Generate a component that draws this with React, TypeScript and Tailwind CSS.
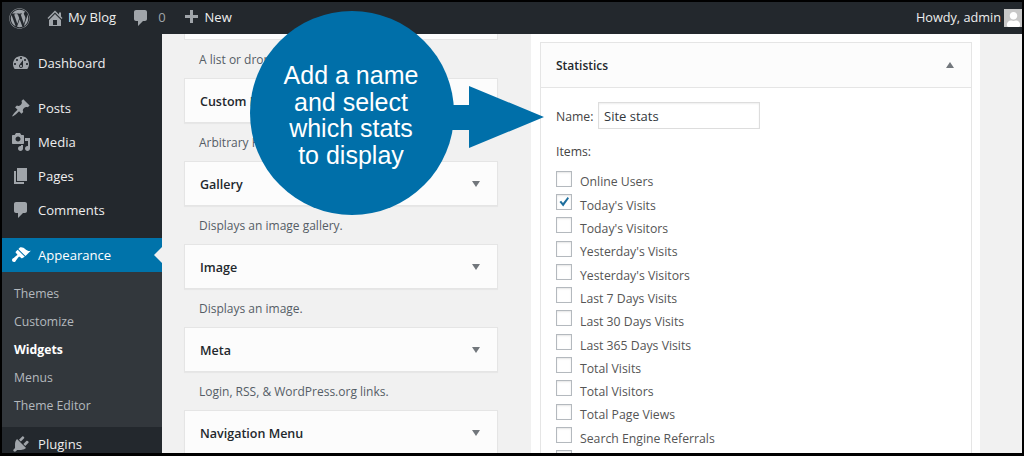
import React from "react";
import { FaWordpress, FaUser } from "react-icons/fa";

function Dash({ d, size = 20, className = "" }: { d: string; size?: number; className?: string }) {
  return (
    <svg width={size} height={size} viewBox="0 0 20 20" fill="currentColor" className={className}>
      <path d={d} />
    </svg>
  );
}

const P = {
  home: "M16 8.5l1.53 1.53-1.06 1.06L10 4.62l-6.47 6.47-1.06-1.06L10 2.5l4 4v-2h2v4zm-6-2.46l6 5.99V18H4v-5.97zM12 17v-5H8v5h4z",
  comment: "M5 2h9c1.1 0 2 .9 2 2v7c0 1.1-.9 2-2 2h-2l-5 5v-5H5c-1.1 0-2-.9-2-2V4c0-1.1.9-2 2-2z",
  plus: "M17 7v3h-5v5H9v-5H4V7h5V2h3v5h5z",
  dash: "M3.76 16h12.48c1.1-1.37 1.76-3.11 1.76-5 0-4.42-3.58-8-8-8s-8 3.58-8 8c0 1.89.66 3.63 1.76 5zM10 4c.55 0 1 .45 1 1s-.45 1-1 1-1-.45-1-1 .45-1 1-1zM6 6c.55 0 1 .45 1 1s-.45 1-1 1-1-.45-1-1 .45-1 1-1zm8 0c.55 0 1 .45 1 1s-.45 1-1 1-1-.45-1-1 .45-1 1-1zm-5.37 5.55L12 7v6c0 1.1-.9 2-2 2s-2-.9-2-2c0-.57.24-1.08.63-1.45zM4 10c.55 0 1 .45 1 1s-.45 1-1 1-1-.45-1-1 .45-1 1-1zm12 0c.55 0 1 .45 1 1s-.45 1-1 1-1-.45-1-1 .45-1 1-1zm-5 3c0-.55-.45-1-1-1s-1 .45-1 1 .45 1 1 1 1-.45 1-1z",
  pin: "M10.44 3.02l1.82-1.82 6.36 6.35-1.83 1.82c-1.05-.68-2.48-.57-3.41.36l-.75.75c-.92.93-1.04 2.35-.35 3.41l-1.83 1.82-2.41-2.41-2.8 2.79c-.42.42-3.38 2.71-3.8 2.29s1.86-3.39 2.28-3.81l2.79-2.79L4.1 9.36l1.83-1.82c1.05.69 2.48.57 3.4-.36l.75-.75c.93-.92 1.05-2.35.36-3.41z",
  media: "M13 11V4c0-.55-.45-1-1-1h-1.67L9 1H5L3.67 3H2c-.55 0-1 .45-1 1v7c0 .55.45 1 1 1h10c.55 0 1-.45 1-1zM7 4.5c1.38 0 2.5 1.12 2.5 2.5S8.38 9.5 7 9.5 4.5 8.38 4.5 7 5.62 4.5 7 4.5zM14 6h5v10.5c0 1.38-1.12 2.5-2.5 2.5S14 17.88 14 16.5s1.12-2.5 2.5-2.5c.17 0 .34.02.5.05V9h-3V6zm-4 8.05V13h2v3.5c0 1.38-1.12 2.5-2.5 2.5S7 17.88 7 16.5 8.12 14 9.5 14c.17 0 .34.02.5.05z",
  pages: "M6 15V2h10v13H6zm-1 1h8v2H3V5h2v11z",
  brush: "M14.48 11.06L7.41 3.99l1.5-1.5c.5-.56 2.3-.47 3.51.32 1.21.8 1.43 1.28 2.91 2.1 1.18.64 2.45 1.26 4.45.85zm-.71.71L6.7 4.7 4.93 6.47c-.39.39-.39 1.02 0 1.41l1.06 1.06c.39.39.39 1.03 0 1.42-.6.6-1.43 1.11-2.21 1.69-.35.26-.7.53-1.01.84C1.43 13.23 1 14.25 1 15c0 1.1.9 2 2 2 .75 0 1.77-.43 2.11-1.77.31-.31.58-.66.84-1.01.58-.78 1.09-1.61 1.69-2.21.39-.39 1.03-.39 1.42 0l1.06 1.06c.39.39 1.02.39 1.41 0z",
  plug: "M13.11 4.36L9.87 7.6 8 5.73l3.24-3.24c.35-.34 1.05-.2 1.56.32.52.51.66 1.21.31 1.55zm-8 1.77l.91-1.12 9.01 9.01-1.19.84c-.71.71-2.63 1.16-3.82 1.16H6.14L4.9 17.26c-.59.59-1.54.59-2.12 0-.59-.58-.59-1.53 0-2.12l1.24-1.24v-3.88c0-1.13.4-3.19 1.09-3.89zm7.26 3.97l3.24-3.24c.34-.35 1.04-.21 1.55.31.52.51.66 1.21.31 1.55l-3.24 3.25z",
};

function Side({ icon, label, active }: { icon: string; label: string; active?: boolean }) {
  return (
    <div className={`h-[34px] flex items-center pl-[9px] text-[13.1px] relative ${active ? "bg-[#0073aa] text-white" : "text-[#eeeeee]"}`}>
      <span className={`w-[20px] h-[20px] flex items-center justify-center mr-[7px] ${active ? "text-white" : "text-[#a0a5aa]"}`}><Dash d={icon} /></span>
      <span className="pt-[2px]">{label}</span>
      {active && <span className="absolute right-0 top-[9px] border-y-[8px] border-y-transparent border-r-[8px] border-r-[#f1f1f1]" />}
    </div>
  );
}

function Sub({ label, current }: { label: string; current?: boolean }) {
  return <div className={`h-[28px] flex items-center pl-[12px] pt-[2px] text-[12.25px] ${current ? "font-bold text-white" : "text-[#b4b9be]"}`}>{label}</div>;
}

function Widget({ title, desc }: { title: string; desc: string }) {
  return (
    <>
      <div className="h-[45px] w-[314px] shrink-0 bg-[#fcfcfc] border border-[#e5e5e5] shadow-[0_1px_1px_rgba(0,0,0,0.04)] flex items-center justify-between pl-[15px] pr-[17px]">
        <span className="text-[12.5px] font-semibold text-[#23282d] pt-[4px]">{title}</span>
        <span className="border-x-[4px] border-x-transparent border-t-[6px] border-t-[#72777c]" />
      </div>
      <div className="h-[38px] shrink-0 flex items-center pl-[15px] pt-[2px] text-[12px] text-[#555d66]">{desc}</div>
    </>
  );
}

function Check({ label, checked }: { label: string; checked?: boolean }) {
  return (
    <div className="h-[23.3px] shrink-0 flex items-center text-[12.25px] text-[#555555]">
      <span className="w-[16px] h-[16px] mr-[8px] -translate-y-[4px] border border-[#b4b9be] bg-white shadow-[inset_0_1px_2px_rgba(0,0,0,0.1)] flex items-center justify-center text-[#1e6f9e]">
        {checked && (
          <svg width="14" height="14" viewBox="0 0 14 14" fill="currentColor"><path d="M2.5 7l1.6-1.3 1.9 2.2L10.6 2 12 3.2 6.2 11.5z" /></svg>
        )}
      </span>
      {label}
    </div>
  );
}

const items = ["Online Users", "Today's Visits", "Today's Visitors", "Yesterday's Visits", "Yesterday's Visitors", "Last 7 Days Visits", "Last 30 Days Visits", "Last 365 Days Visits", "Total Visits", "Total Visitors", "Total Page Views", "Search Engine Referrals", ""];

export default function App() {
  return (
    <div className="w-[1024px] h-[456px] box-border border-2 border-b-[3px] border-black overflow-hidden relative flex flex-col bg-[#f1f1f1]" style={{ fontFamily: '"Open Sans", sans-serif' }}>
      <div className="h-[32px] shrink-0 bg-[#23282d] flex items-center text-[13px] text-[#eeeeee]">
        <span className="ml-[7px] text-[#a0a5aa] text-[21px] flex"><FaWordpress /></span>
        <span className="ml-[15px] text-[#a0a5aa] flex"><Dash d={P.home} /></span>
        <span className="ml-[3px]">My Blog</span>
        <span className="ml-[15px] text-[#a0a5aa] flex"><Dash d={P.comment} /></span>
        <span className="ml-[7px] text-[#a0a5aa]">0</span>
        <span className="ml-[15px] text-[#a0a5aa] flex"><Dash d={P.plus} /></span>
        <span className="ml-[4px]">New</span>
        <span className="ml-auto mr-[3px] text-[12.7px]">Howdy, admin</span>
        <span className="w-[18px] h-[18px] bg-[#c8c8c8] text-white text-[15px] flex items-end justify-center overflow-hidden"><FaUser /></span>
      </div>
      <div className="flex flex-1 min-h-0">
        <div className="w-[160px] shrink-0 bg-[#23282d] overflow-hidden">
          <div className="pt-[12px] pb-[11px]">
            <Side icon={P.dash} label="Dashboard" />
          </div>
          <Side icon={P.pin} label="Posts" />
          <Side icon={P.media} label="Media" />
          <Side icon={P.pages} label="Pages" />
          <Side icon={P.comment} label="Comments" />
          <div className="h-[11px]" />
          <Side icon={P.brush} label="Appearance" active />
          <div className="bg-[#32373c] pt-[7px] pb-[8px]">
            <Sub label="Themes" />
            <Sub label="Customize" />
            <Sub label="Widgets" current />
            <Sub label="Menus" />
            <Sub label="Theme Editor" />
          </div>
          <Side icon={P.plug} label="Plugins" />
        </div>
        <div className="w-[369px] shrink-0 pl-[22px] flex flex-col overflow-hidden">
          <div className="h-[6px] w-[314px] shrink-0 bg-[#fcfcfc] border-x border-b border-[#e5e5e5]" />
          <div className="h-[38px] shrink-0 flex items-center pl-[15px] pt-[2px] text-[12px] text-[#555d66]">A list or dropdown of categories.</div>
          <Widget title="Custom HTML" desc="Arbitrary HTML code." />
          <Widget title="Gallery" desc="Displays an image gallery." />
          <Widget title="Image" desc="Displays an image." />
          <Widget title="Meta" desc="Login, RSS, & WordPress.org links." />
          <Widget title="Navigation Menu" desc="" />
        </div>
        <div className="w-[449px] shrink-0 bg-white pl-[9px] pt-[8px] overflow-hidden">
          <div className="w-[432px] h-[500px] border border-[#e5e5e5]">
            <div className="h-[45px] bg-[#fcfcfc] border-b border-[#e5e5e5] flex items-center justify-between pl-[15px] pr-[17px]">
              <span className="text-[12px] font-semibold text-[#23282d] pt-[2px]">Statistics</span>
              <span className="border-x-[4px] border-x-transparent border-b-[6px] border-b-[#72777c]" />
            </div>
            <div className="pl-[15px] pt-[14px] text-[12.25px] text-[#444444]">
              <div className="flex items-center">
                <span className="w-[42px] pt-[4px]">Name:</span>
                <div className="w-[162px] h-[27px] border border-[#dddddd] shadow-[inset_0_1px_2px_rgba(0,0,0,0.07)] flex items-center pl-[5px] pt-[2px] text-[#32373c] text-[13px]">Site stats</div>
              </div>
              <div className="mt-[13px] h-[18px] flex items-center pt-[2px]">Items:</div>
              <div className="mt-[11px] flex flex-col">
                {items.map((l, i) => <Check key={i} label={l} checked={i === 1} />)}
              </div>
            </div>
          </div>
        </div>
        <div className="flex-1 bg-[#f1f1f1]" />
      </div>

      <div className="absolute left-[248px] top-[9px] w-[204px] h-[204px] rounded-full bg-[#006fa9] flex items-center justify-center text-center text-white text-[25px] leading-[26.5px] pt-[4px] pr-[2px]" style={{ fontFamily: '"Liberation Sans", Arial, sans-serif' }}>
        <div>Add a name<br />and select<br />which stats<br />to display</div>
      </div>
      <svg className="absolute left-[440px] top-[80px]" width="110" height="72" viewBox="0 0 110 72">
        <polygon points="0,23 27,23 27,4 102,35 27,66 27,48 0,48" fill="#006fa9" />
      </svg>
    </div>
  );
}
